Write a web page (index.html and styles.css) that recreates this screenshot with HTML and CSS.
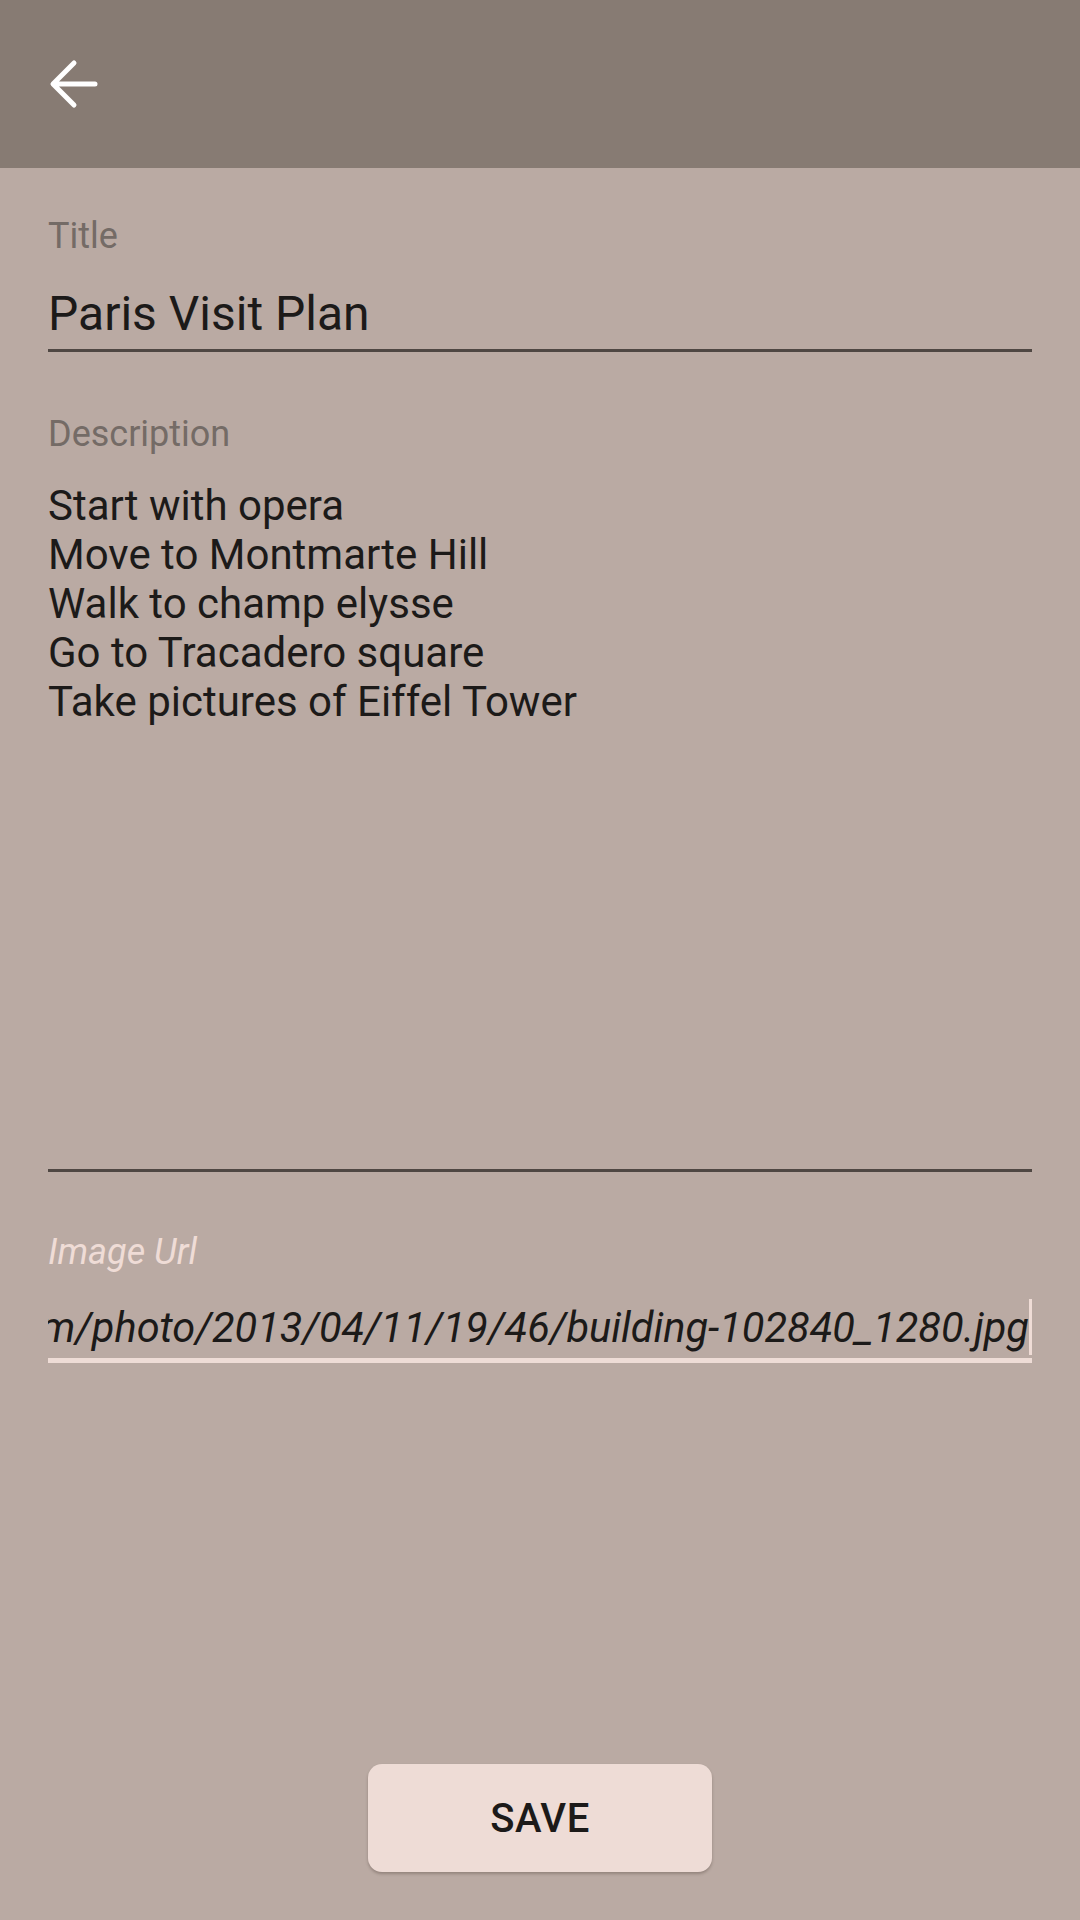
FILE: index.html
```html
<!DOCTYPE html>
<html>
<head>
<meta charset="utf-8">
<link rel="stylesheet" href="styles.css">
</head>
<body>
<div class="screen">
  <header class="appbar">
    <svg class="back" width="52" height="52" viewBox="0 0 52 52" aria-label="Back">
      <path d="M47 26H6 M26 5L5 26L26 47" fill="none" stroke="#ffffff" stroke-width="5" stroke-linecap="round" stroke-linejoin="round"/>
    </svg>
  </header>
  <main class="form">
    <div class="field field-title">
      <div class="label">Title</div>
      <div class="value title-value">Paris Visit Plan</div>
    </div>
    <div class="field field-desc">
      <div class="label">Description</div>
      <div class="value desc-value">Start with opera<br>Move to Montmarte Hill<br>Walk to champ elysse<br>Go to Tracadero square<br>Take pictures of Eiffel Tower</div>
    </div>
    <div class="field field-url">
      <div class="label label-focus">Image Url</div>
      <div class="value url-value"><span class="url-text">https://cdn.pixabay.com/photo/2013/04/11/19/46/building-102840_1280.jpg</span><span class="cursor"></span></div>
    </div>
    <div class="actions">
      <button class="save">SAVE</button>
    </div>
  </main>
</div>
</body>
</html>
```
FILE: styles.css
```css
html, body {
  margin: 0;
  padding: 0;
}
body {
  background: #baaaa3;
  font-family: Roboto, "Noto Sans", "Liberation Sans", sans-serif;
  color: #1c1a19;
}
.screen {
  width: 1080px;
  height: 1920px;
  display: flex;
  flex-direction: column;
  overflow: hidden;
}
.appbar {
  height: 168px;
  flex: none;
  background: #877b73;
  display: flex;
  align-items: center;
  padding-left: 48px;
  box-sizing: border-box;
}
.back {
  display: block;
}
.form {
  flex: 1;
  display: flex;
  flex-direction: column;
  padding: 0 48px;
}
.label {
  font-size: 36px;
  line-height: 44px;
  color: #746b66;
}
.field-title {
  margin-top: 46px;
}
.title-value {
  margin-top: 27px;
  font-size: 48px;
  line-height: 57px;
  padding-bottom: 7px;
  border-bottom: 3px solid #4f4743;
}
.field-desc {
  margin-top: 60px;
}
.desc-value {
  margin-top: 25px;
  font-size: 42px;
  line-height: 49px;
  height: 691px;
  box-sizing: border-box;
  border-bottom: 3px solid #4f4743;
}
.field-url {
  margin-top: 58px;
}
.label-focus {
  font-style: italic;
  color: #efdcd6;
}
.url-value {
  margin-top: 25px;
  font-size: 41.5px;
  line-height: 49px;
  font-style: italic;
  padding-bottom: 3px;
  border-bottom: 5px solid #eedcd6;
  display: flex;
  justify-content: flex-end;
  align-items: center;
  overflow: hidden;
  white-space: nowrap;
}
.url-text {
  flex: none;
}
.cursor {
  flex: none;
  width: 3px;
  height: 56px;
  background: #efdcd6;
}
.actions {
  margin-top: auto;
  margin-bottom: 48px;
  display: flex;
  justify-content: center;
}
.save {
  width: 344px;
  height: 108px;
  border: none;
  border-radius: 14px;
  background: #eedcd6;
  color: #1c1a19;
  font-family: Roboto, "Noto Sans", sans-serif;
  font-size: 40px;
  font-weight: 500;
  letter-spacing: 0.5px;
  box-shadow: 0 2px 3px rgba(60, 45, 40, 0.3);
  padding: 0;
}
```
